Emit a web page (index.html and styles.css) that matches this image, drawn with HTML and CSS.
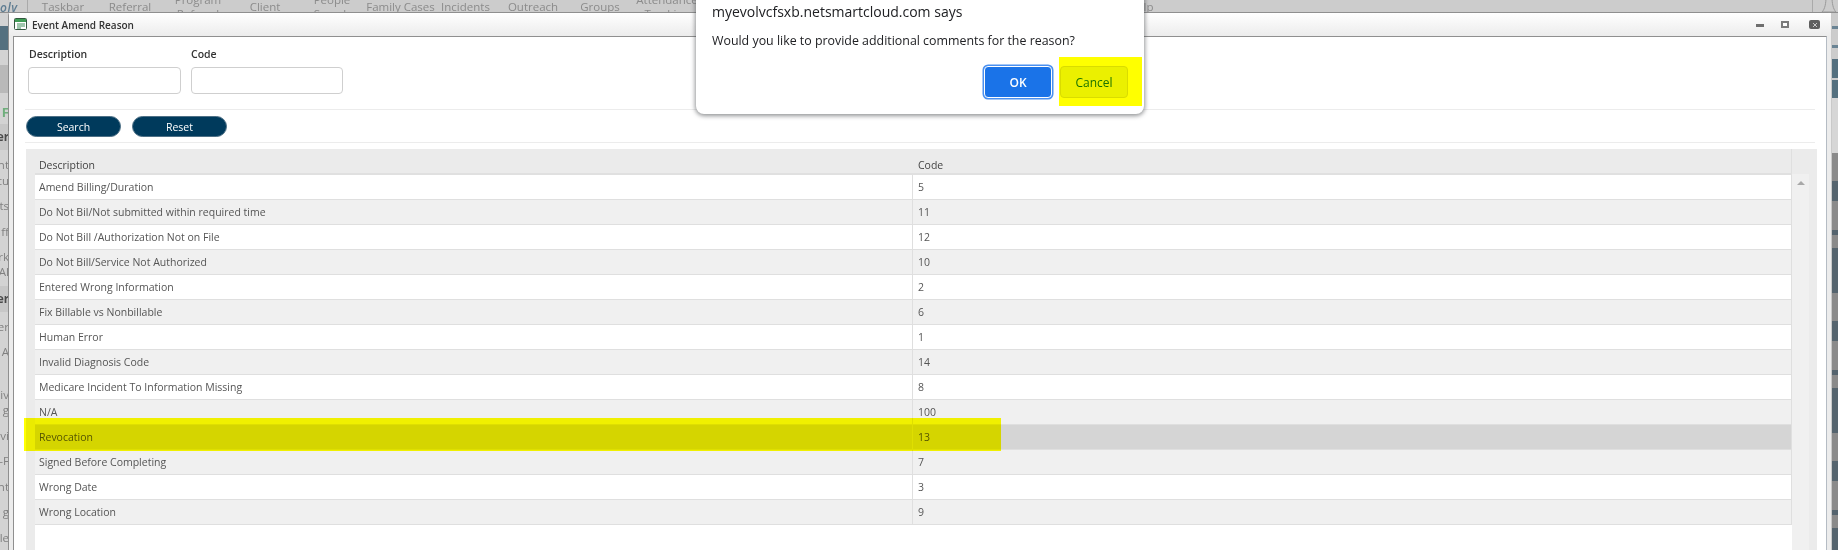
FILE: index.html
```html
<!DOCTYPE html>
<html lang="en">
<head>
<meta charset="utf-8">
<title>Event Amend Reason</title>
<link rel="stylesheet" href="styles.css">
</head>
<body>
<div class="app">
  <header class="nav">
    <div class="brand">olv</div>
    <nav class="nav-cells">
      <span class="nav-item">Taskbar</span>
      <span class="nav-item">Referral</span>
      <span class="nav-item nav-two">Program<br>Referral</span>
      <span class="nav-item">Client</span>
      <span class="nav-item nav-two">People<br>Search</span>
      <span class="nav-item">Family Cases</span>
      <span class="nav-item">Incidents</span>
      <span class="nav-item">Outreach</span>
      <span class="nav-item">Groups</span>
      <span class="nav-item nav-two">Attendance<br>Tracking</span>
      <span class="nav-item nav-help">Help</span>
    </nav>
    <div class="bell-cell">
      <svg class="bell" width="16" height="13" viewBox="0 0 16 13"><path d="M5-3C5 3 4 9 1 12h14c-3-3-4-9-4-15" fill="none" stroke="#9a9a9a" stroke-width="1"/></svg>
    </div>
  </header>

  <div class="backdrop">
    <aside class="side">
      <div class="s s-blue"></div>
      <div class="s s-dark"></div>
      <div class="s s-green">F</div>
      <div class="s s-band">er</div>
      <div class="s m8">nt</div>
      <div class="s m2">cu</div>
      <div class="s m11">ts</div>
      <div class="s m12">ff</div>
      <div class="s m11">rk</div>
      <div class="s m1">Al</div>
      <div class="s s-band s-band2">er</div>
      <div class="s m8">er</div>
      <div class="s m11">A</div>
      <div class="s m29">iv</div>
      <div class="s m1">g</div>
      <div class="s m12">vi</div>
      <div class="s m11">-F</div>
      <div class="s m12">nt</div>
      <div class="s m11">g</div>
      <div class="s m12">le</div>
    </aside>
    <aside class="rail">
      <div class="r r-line"></div>
      <div class="r r-line r-line2"></div>
      <div class="r r-tab"></div>
      <div class="r r-tab2"></div>
      <div class="r r-light"></div>
      <div class="r r-stripes"></div>
    </aside>
  </div>

  <section class="window">
    <div class="titlebar">
      <svg class="win-icon" width="14" height="13" viewBox="0 0 14 13">
        <rect x="0.5" y="0.5" width="12" height="11" rx="1" fill="#fff" stroke="#33573f"/>
        <rect x="1" y="1" width="11" height="3" fill="#3f9c55"/>
        <path d="M3 6h8M3 8h8M3 10h4" stroke="#3f8f5a" stroke-width="1"/>
      </svg>
      <span class="win-title">Event Amend Reason</span>
      <div class="win-controls">
        <span class="ctl-min"></span>
        <span class="ctl-max"></span>
        <span class="ctl-close">
          <svg width="10" height="8" viewBox="0 0 10 8"><path d="M3 2l4 4M7 2l-4 4" stroke="#c8c8c8" stroke-width="1"/></svg>
        </span>
      </div>
    </div>
    <div class="win-body">
      <div class="filters">
        <label class="field"><span class="field-label">Description</span><input class="field-input" type="text"></label>
        <label class="field"><span class="field-label">Code</span><input class="field-input" type="text"></label>
      </div>
      <div class="actions">
        <button class="pill" type="button">Search</button>
        <button class="pill" type="button">Reset</button>
      </div>
      <div class="grid-wrap">
        <div class="grid-main">
          <div class="row row-head"><div class="c1">Description</div><div class="c2">Code</div></div>
          <div class="row"><div class="c1">Amend Billing/Duration</div><div class="c2">5</div></div>
          <div class="row alt"><div class="c1">Do Not Bil/Not submitted within required time</div><div class="c2">11</div></div>
          <div class="row"><div class="c1">Do Not Bill /Authorization Not on File</div><div class="c2">12</div></div>
          <div class="row alt"><div class="c1">Do Not Bill/Service Not Authorized</div><div class="c2">10</div></div>
          <div class="row"><div class="c1">Entered Wrong Information</div><div class="c2">2</div></div>
          <div class="row alt"><div class="c1">Fix Billable vs Nonbillable</div><div class="c2">6</div></div>
          <div class="row"><div class="c1">Human Error</div><div class="c2">1</div></div>
          <div class="row alt"><div class="c1">Invalid Diagnosis Code</div><div class="c2">14</div></div>
          <div class="row"><div class="c1">Medicare Incident To Information Missing</div><div class="c2">8</div></div>
          <div class="row alt"><div class="c1">N/A</div><div class="c2">100</div></div>
          <div class="row sel"><div class="c1">Revocation</div><div class="c2">13</div></div>
          <div class="row alt"><div class="c1">Signed Before Completing</div><div class="c2">7</div></div>
          <div class="row"><div class="c1">Wrong Date</div><div class="c2">3</div></div>
          <div class="row alt"><div class="c1">Wrong Location</div><div class="c2">9</div></div>
        </div>
        <div class="grid-side">
          <div class="side-head"></div>
          <div class="scroll"><span class="scroll-up"></span></div>
        </div>
      </div>
    </div>
  </section>

  <div class="mark mark-row"></div>

  <div class="dialog" role="dialog">
    <p class="dlg-title">myevolvcfsxb.netsmartcloud.com says</p>
    <p class="dlg-msg">Would you like to provide additional comments for the reason?</p>
    <div class="dlg-actions">
      <button class="dlg-btn dlg-ok" type="button">OK</button>
      <button class="dlg-btn dlg-cancel" type="button">Cancel</button>
    </div>
  </div>
  <div class="mark mark-cancel"></div>
</div>
</body>
</html>
```
FILE: styles.css
```css
* { box-sizing: border-box; }
html, body { margin: 0; padding: 0; }
body { width: 1838px; height: 550px; overflow: hidden; font-family: "Open Sans", "Liberation Sans", sans-serif; }

.app { position: relative; width: 1838px; height: 550px; overflow: hidden; background: #d3d3d3; }

/* dimmed page behind the window */
.nav { display: flex; height: 13px; background: #cccccc; border-bottom: 1px solid #8f8f8f; overflow: hidden; }
.brand { width: 28px; flex: none; height: 13px; border-right: 1px solid #aaa; text-align: right; padding-right: 10px; font: italic 600 12px/15px "Open Sans", sans-serif; color: #5f7d92; letter-spacing: .5px; }
.nav-cells { display: grid; grid-template-columns: 66px 68px 68px 66px 68px 69px 61px 74px 60px 74px 419px 36px; flex: none; padding-left: 2px; font-size: 11.5px; line-height: 14px; color: #8b8b8b; }
.nav-item { text-align: center; white-space: nowrap; height: 13px; }
.nav-two { margin-top: -7px; height: 30px; }
.nav-help { grid-column: 12; }
.bell-cell { margin-left: auto; width: 26px; height: 13px; border-left: 1px solid #aaa; padding-left: 8px; }
.bell { display: block; }

.backdrop { position: absolute; inset: 13px 0 0 0; display: flex; justify-content: space-between; }
.side { width: 9px; display: flex; flex-direction: column; align-items: flex-end; font-size: 11.5px; line-height: 14px; color: #808080; overflow: hidden; }
.s { width: 9px; height: 14px; flex: none; display: flex; justify-content: flex-end; white-space: nowrap; }
.s-blue { height: 24px; margin-top: 13px; background: #54707f; }
.s-dark { height: 28px; margin-top: 15px; background: #b9b9b9; }
.s-green { height: 14px; margin-top: 12px; color: #6fae7c; font-weight: 700; font-size: 13px; }
.s-band { height: 26px; margin-top: 5px; background: #c7c7c7; color: #4a4a4a; font-weight: 700; align-items: center; }
.s-band2 { margin-top: 7px; }
.m1 { margin-top: 1px; }
.m2 { margin-top: 2px; }
.m8 { margin-top: 8px; }
.m11 { margin-top: 11px; }
.m12 { margin-top: 12px; }
.m29 { margin-top: 29px; }

.rail { width: 7px; display: flex; flex-direction: column; background: #cccccc; height: 537px; }
.r { flex: none; }
.r-line { height: 3px; margin-top: 13px; background: #6a8494; }
.r-line2 { margin-top: 16px; }
.r-tab { height: 19px; margin-top: 11px; background: #54707f; }
.r-tab2 { height: 18px; margin-top: 2px; background: #54707f; }
.r-light { height: 55px; background: #d6d6d6; }
.r-stripes { height: 398px; background: #8a8a8a repeating-linear-gradient(to bottom, #8a8a8a 0, #8a8a8a 28px, #55646e 28px, #55646e 48px, #8a8a8a 48px, #8a8a8a 77px, #55646e 77px, #55646e 82px, #8a8a8a 82px, #8a8a8a 95px, #55646e 95px, #55646e 140px); }

/* modal window */
.window { position: absolute; left: 8px; top: 12px; width: 1824px; height: 538px; display: flex; flex-direction: column; background: #ececec; border: 1px solid #8f8f8f; border-bottom: 0; border-right-color: #c9c9c9; border-radius: 4px 4px 0 0; }
.titlebar { flex: none; height: 23px; display: flex; align-items: center; padding-left: 5px; background: linear-gradient(#ffffff, #ececec); }
.win-icon { flex: none; }
.win-title { margin-left: 4px; font-size: 10px; font-weight: 600; color: #333; white-space: nowrap; }
.win-controls { margin-left: auto; display: flex; align-items: center; }
.ctl-min { width: 8px; height: 3px; background: #6e6e6e; margin-top: 1px; }
.ctl-max { width: 8px; height: 7px; margin-left: 17px; border: 2px solid #7c7c7c; background: #fff; }
.ctl-close { width: 11px; height: 9px; margin: 0 11px 0 20px; background: #5f5f5f; border-radius: 2px; display: flex; align-items: center; justify-content: center; }
.ctl-close svg { display: block; }

.win-body { flex: 1; margin: 0 4px; background: #fff; border: 1px solid #8f8f8f; border-bottom: 0; border-right-color: #b5bcc4; min-height: 0; display: flex; flex-direction: column; }

.filters { display: flex; gap: 10px; margin: 0 11px; padding: 10px 0 15px 3px; border-bottom: 1px solid #ececec; height: 73px; }
.field { display: flex; flex-direction: column; width: 152px; }
.field:first-child { width: 153px; }
.field-label { font-size: 10.5px; font-weight: 600; line-height: 15px; color: #333; height: 20px; }
.field:first-child .field-label { padding-left: 1px; }
.field-input { width: 100%; height: 27px; border: 1px solid #cfcfcf; border-radius: 4px; background: #fff; }

.actions { display: flex; gap: 11px; margin: 0 11px; padding: 6px 0 5px 1px; height: 33px; border-bottom: 1px solid #ececec; }
.pill { width: 95px; height: 21px; padding: 0; border: 1px solid #4e7086; border-radius: 11px; background: #003a5c; color: #fff; font: 400 10.5px "Open Sans", sans-serif; }

.grid-wrap { flex: 1; display: flex; margin: 6px 0 0 12px; width: 1791px; background: #ebebeb; padding-left: 9px; min-height: 0; }
.grid-main { width: 1757px; background: #fff; flex: none; }
.row { display: flex; height: 25px; border-bottom: 1px solid #dfdfdf; border-right: 1px solid #dfdfdf; font-size: 10.5px; line-height: 24px; color: #555; }
.row.alt { background: #f0f0f0; }
.row.sel { background: #d5d5d5; }
.row-head { height: 26px; background: #ebebeb; border-bottom: 2px solid #e0e0e0; border-right: 1px solid #dfdfdf; color: #444; line-height: 32px; }
.c1 { width: 878px; flex: none; padding-left: 4px; border-right: 1px solid #dfdfdf; white-space: nowrap; }
.c2 { padding-left: 5px; }
.row-head .c1 { border-right-color: #ebebeb; }
.grid-side { flex: 1; display: flex; flex-direction: column; }
.side-head { height: 25px; flex: none; }
.scroll { width: 17px; flex: 1; background: #f0f0f0; display: flex; justify-content: center; padding-top: 7px; }
.scroll-up { width: 0; height: 0; border: 4px solid transparent; border-top: 0; border-bottom: 4px solid #a8a8a8; }

/* browser confirm dialog */
.dialog { position: absolute; left: 696px; top: -30px; width: 448px; height: 144px; background: #fff; border-radius: 8px; box-shadow: 0 1px 4px 1px rgba(60,64,67,.55); padding: 30px 16px 0; color: #202124; }
.dlg-title { margin: 0; font-size: 14px; line-height: 24px; white-space: nowrap; }
.dlg-msg { margin: 8px 0 0; font-size: 12.4px; line-height: 18px; white-space: nowrap; }
.dlg-actions { display: flex; justify-content: flex-end; gap: 8px; margin-top: 16px; }
.dlg-btn { width: 68px; height: 32px; padding: 0; border-radius: 4px; font: 600 12px "Open Sans", sans-serif; }
.dlg-ok { background: #1a73e8; color: #fff; border: 1px solid #fff; box-shadow: 0 0 0 1.5px #4a90f0; }
.dlg-cancel { background: #ebf0f4; color: #1a73e8; border: 1px solid #dadce0; font-weight: 400; }

/* yellow marker highlights */
.mark { position: absolute; background: #ffff00; mix-blend-mode: multiply; }
.mark-row { left: 24px; top: 418px; width: 977px; height: 33px; }
.mark-cancel { left: 1059px; top: 57px; width: 83px; height: 49px; }
```
